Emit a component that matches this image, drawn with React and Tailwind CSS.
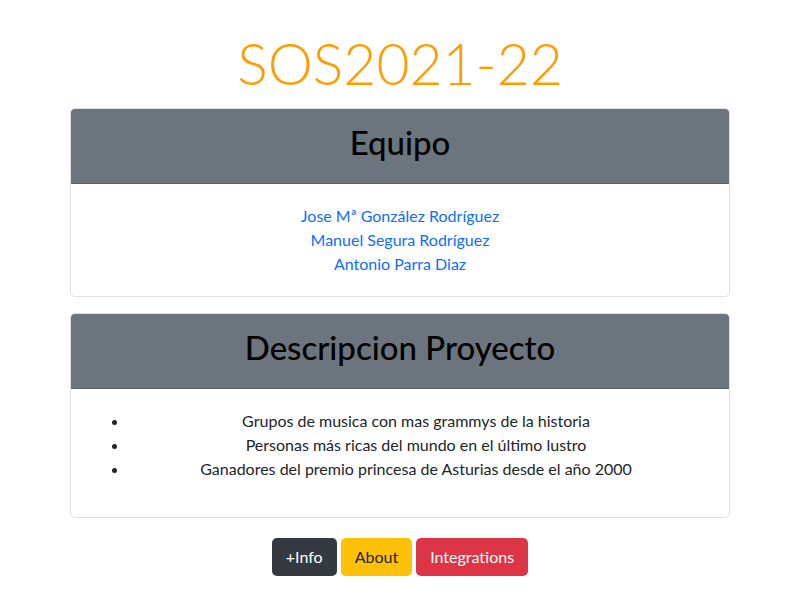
import React from 'react';

const font = { fontFamily: 'Lato, "Noto Sans", sans-serif' };

function Card({ title, children, bodyClass }) {
  return (
    <div className="w-[660px] mx-auto border border-[#dfdfdf] rounded-[5px] overflow-hidden bg-white">
      <div className="h-[75px] bg-[#6c757d] border-b border-[#5b636a] flex items-center justify-center pb-[6px]">
        <h1 className="text-[33px] leading-[1.2] font-medium text-black">{title}</h1>
      </div>
      <div className={bodyClass}>{children}</div>
    </div>
  );
}

export default function App() {
  const team = ['Jose Mª González Rodríguez', 'Manuel Segura Rodríguez', 'Antonio Parra Diaz'];
  const items = [
    'Grupos de musica con mas grammys de la historia',
    'Personas más ricas del mundo en el último lustro',
    'Ganadores del premio princesa de Asturias desde el año 2000',
  ];

  return (
    <div className="min-h-[600px] bg-white text-[#212529] text-base" style={font}>
      <h1 className="text-center text-[57px] leading-[74px] font-light text-[#ff9c00] pt-[26px] mb-[8px]">
        SOS2021-22
      </h1>

      <Card title="Equipo" bodyClass="py-5 flex flex-col items-center">
        {team.map((name) => (
          <a key={name} href="#" className="text-[#0d6efd] leading-6">
            {name}
          </a>
        ))}
      </Card>

      <div className="h-[16px]" />

      <Card title="Descripcion Proyecto" bodyClass="pt-5 pb-9 px-4">
        <ul className="list-disc pl-[42px]">
          {items.map((item) => (
            <li key={item} className="text-center leading-6 pr-[10px]">
              {item}
            </li>
          ))}
        </ul>
      </Card>

      <div className="flex justify-center gap-1 mt-[20px]">
        <button className="h-[38px] px-[14px] rounded-[5px] bg-[#343a40] text-white">+Info</button>
        <button className="h-[38px] px-[14px] rounded-[5px] bg-[#ffc107] text-[#212529]">About</button>
        <button className="h-[38px] px-[14px] rounded-[5px] bg-[#dc3545] text-white">Integrations</button>
      </div>
    </div>
  );
}
